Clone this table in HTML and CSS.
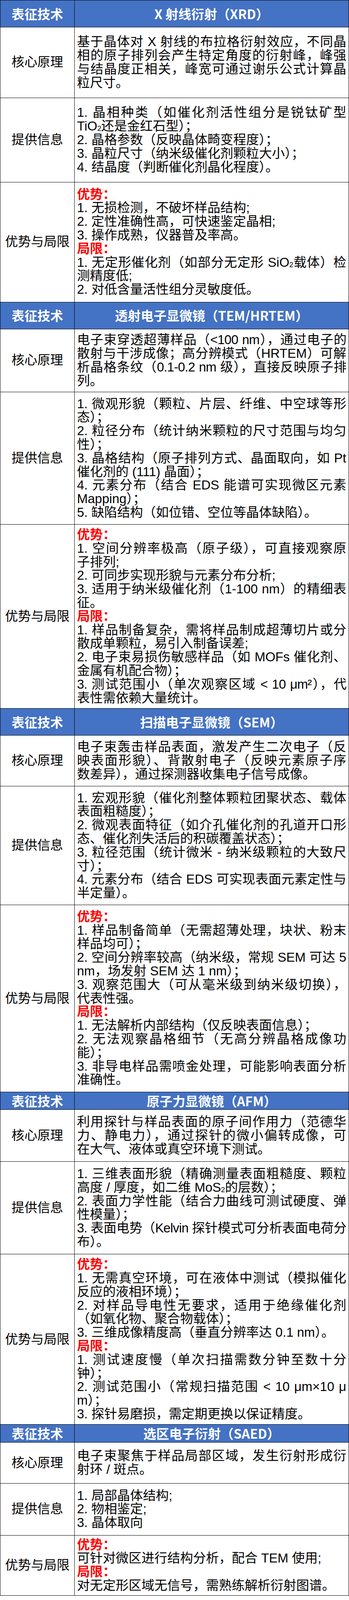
FILE: index.html
```html
<!DOCTYPE html>
<html lang="zh-CN">
<head>
<meta charset="utf-8">
<title>催化剂表征技术对比</title>
<link rel="stylesheet" href="styles.css">
</head>
<body>
<table class="spec">
<colgroup><col class="col-label"><col class="col-desc"></colgroup>
<tbody>
<tr class="head"><th>表征技术</th><th>X 射线衍射（XRD）</th></tr>
<tr class="gap-xl"><td class="label">核心原理</td><td class="desc"><p><span class="ln">基于晶体对 X 射线的布拉格衍射效应，不同晶</span><span class="ln">相的原子排列会产生特定角度的衍射峰，峰强</span><span class="ln">与结晶度正相关，峰宽可通过谢乐公式计算晶</span>粒尺寸。</p></td></tr>
<tr class="gap-xl"><td class="label">提供信息</td><td class="desc"><p><span class="ln">1. 晶相种类（如催化剂活性组分是锐钛矿型</span>TiO<sub class="sub">2</sub>还是金红石型）；</p><p>2. 晶格参数（反映晶体畸变程度）；</p><p>3. 晶粒尺寸（纳米级催化剂颗粒大小）；</p><p>4. 结晶度（判断催化剂晶化程度）。</p></td></tr>
<tr class="gap-m"><td class="label">优势与局限</td><td class="desc"><p class="tag">优势：</p><p>1. 无损检测，不破坏样品结构;</p><p>2. 定性准确性高，可快速鉴定晶相;</p><p>3. 操作成熟，仪器普及率高。</p><p class="tag">局限：</p><p><span class="ln">1. 无定形催化剂（如部分无定形 SiO<sub class="sub">2</sub>载体）检</span>测精度低;</p><p>2. 对低含量活性组分灵敏度低。</p></td></tr>

<tr class="head"><th>表征技术</th><th>透射电子显微镜（TEM/HRTEM）</th></tr>
<tr class="gap-s"><td class="label">核心原理</td><td class="desc"><p><span class="ln fit">电子束穿透超薄样品（&lt;100 nm），通过电子的</span><span class="ln">散射与干涉成像；高分辨模式（HRTEM）可解</span><span class="ln fit">析晶格条纹（0.1-0.2 nm 级），直接反映原子排</span>列。</p></td></tr>
<tr class="gap"><td class="label">提供信息</td><td class="desc"><p><span class="ln">1. 微观形貌（颗粒、片层、纤维、中空球等形</span>态）；</p><p><span class="ln">2. 粒径分布（统计纳米颗粒的尺寸范围与均匀</span>性）；</p><p><span class="ln">3. 晶格结构（原子排列方式、晶面取向，如 Pt</span>催化剂的 (111) 晶面）；</p><p><span class="ln">4. 元素分布（结合 EDS 能谱可实现微区元素</span>Mapping）；</p><p>5. 缺陷结构（如位错、空位等晶体缺陷）。</p></td></tr>
<tr class="gap-xs"><td class="label">优势与局限</td><td class="desc"><p class="tag">优势：</p><p><span class="ln">1. 空间分辨率极高（原子级），可直接观察原</span>子排列;</p><p>2. 可同步实现形貌与元素分布分析;</p><p><span class="ln">3. 适用于纳米级催化剂（1-100 nm）的精细表</span>征。</p><p class="tag">局限：</p><p><span class="ln">1. 样品制备复杂，需将样品制成超薄切片或分</span>散成单颗粒，易引入制备误差;</p><p><span class="ln">2. 电子束易损伤敏感样品（如 MOFs 催化剂、</span>金属有机配合物）；</p><p><span class="ln fit">3. 测试范围小（单次观察区域 &lt; 10 μm²），代</span>表性需依赖大量统计。</p></td></tr>

<tr class="head"><th>表征技术</th><th>扫描电子显微镜（SEM）</th></tr>
<tr class="gap"><td class="label">核心原理</td><td class="desc"><p><span class="ln">电子束轰击样品表面，激发产生二次电子（反</span><span class="ln">映表面形貌）、背散射电子（反映元素原子序</span>数差异），通过探测器收集电子信号成像。</p></td></tr>
<tr class="gap"><td class="label">提供信息</td><td class="desc"><p><span class="ln">1. 宏观形貌（催化剂整体颗粒团聚状态、载体</span>表面粗糙度）；</p><p><span class="ln">2. 微观表面特征（如介孔催化剂的孔道开口形</span>态、催化剂失活后的积碳覆盖状态）；</p><p><span class="ln">3. 粒径范围（统计微米 - 纳米级颗粒的大致尺</span>寸）；</p><p><span class="ln">4. 元素分布（结合 EDS 可实现表面元素定性与</span>半定量）。</p></td></tr>
<tr class="gap"><td class="label">优势与局限</td><td class="desc"><p class="tag">优势：</p><p><span class="ln">1. 样品制备简单（无需超薄处理，块状、粉末</span>样品均可）；</p><p><span class="ln">2. 空间分辨率较高（纳米级，常规 SEM 可达 5</span>nm，场发射 SEM 达 1 nm）；</p><p><span class="ln">3. 观察范围大（可从毫米级到纳米级切换），</span>代表性强。</p><p class="tag">局限：</p><p>1. 无法解析内部结构（仅反映表面信息）；</p><p><span class="ln">2. 无法观察晶格细节（无高分辨晶格成像功</span>能）；</p><p><span class="ln">3. 非导电样品需喷金处理，可能影响表面分析</span>准确性。</p></td></tr>

<tr class="head compact"><th>表征技术</th><th>原子力显微镜（AFM）</th></tr>
<tr class="gap-m"><td class="label">核心原理</td><td class="desc"><p><span class="ln">利用探针与样品表面的原子间作用力（范德华</span><span class="ln">力、静电力），通过探针的微小偏转成像，可</span>在大气、液体或真空环境下测试。</p></td></tr>
<tr class="gap-m"><td class="label">提供信息</td><td class="desc"><p><span class="ln">1. 三维表面形貌（精确测量表面粗糙度、颗粒</span>高度 / 厚度，如二维 MoS<sub class="sub">2</sub>的层数）；</p><p><span class="ln">2. 表面力学性能（结合力曲线可测试硬度、弹</span>性模量）；</p><p><span class="ln fit">3. 表面电势（Kelvin 探针模式可分析表面电荷分</span>布）。</p></td></tr>
<tr class="gap-xs"><td class="label">优势与局限</td><td class="desc"><p class="tag">优势：</p><p><span class="ln">1. 无需真空环境，可在液体中测试（模拟催化</span>反应的液相环境）；</p><p><span class="ln">2. 对样品导电性无要求，适用于绝缘催化剂</span>（如氧化物、聚合物载体）；</p><p>3. 三维成像精度高（垂直分辨率达 0.1 nm）。</p><p class="tag">局限：</p><p><span class="ln">1. 测试速度慢（单次扫描需数分钟至数十分</span>钟）；</p><p><span class="ln">2. 测试范围小（常规扫描范围 &lt; 10 μm×10 μ</span>m）；</p><p>3. 探针易磨损，需定期更换以保证精度。</p></td></tr>

<tr class="head compact"><th>表征技术</th><th>选区电子衍射（SAED）</th></tr>
<tr class="gap-l"><td class="label">核心原理</td><td class="desc"><p><span class="ln">电子束聚焦于样品局部区域，发生衍射形成衍</span>射环 / 斑点。</p></td></tr>
<tr class="gap-m"><td class="label">提供信息</td><td class="desc"><p>1. 局部晶体结构;</p><p>2. 物相鉴定;</p><p>3. 晶体取向</p></td></tr>
<tr class="gap-xxs"><td class="label">优势与局限</td><td class="desc"><p class="tag">优势：</p><p>可针对微区进行结构分析，配合 TEM 使用;</p><p class="tag">局限：</p><p>对无定形区域无信号，需熟练解析衍射图谱。</p></td></tr>
</tbody>
</table>
</body>
</html>
```

FILE: styles.css
```css
html, body {
  margin: 0;
  padding: 0;
  background: #ffffff;
}

body {
  font-family: "Liberation Sans", "Noto Sans CJK SC", sans-serif;
  color: #000000;
}

.spec {
  width: 893px;
  table-layout: fixed;
  border-collapse: collapse;
  font-size: 33px;
  line-height: 34.8px;
}

.col-label {
  width: 190px;
}

.spec th,
.spec td {
  border: 1px solid #000000;
  vertical-align: middle;
}

.head th {
  background: #4472c4;
  color: #ffffff;
  font-family: "Noto Sans CJK SC", sans-serif;
  font-weight: 700;
  text-align: center;
  padding: 16.5px 0;
}

.head.compact th {
  padding: 5px 0;
}

.label {
  text-align: center;
  padding-left: 0;
  padding-right: 0;
  white-space: nowrap;
}

.desc {
  padding-left: 6px;
  padding-right: 6px;
  text-align: left;
}

.desc p {
  margin: 0;
}

.ln {
  display: block;
  white-space: nowrap;
  text-align: justify;
  text-align-last: justify;
}

.ln.fit {
  letter-spacing: -0.8px;
}

.tag {
  color: #ff0000;
  font-weight: 700;
}

.sub {
  font-size: 0.55em;
  line-height: 1;
  vertical-align: -0.05em;
}

.gap-xl td { padding-top: 20.5px; padding-bottom: 20.5px; }
.gap-l td { padding-top: 17px; padding-bottom: 17px; }
.gap-m td { padding-top: 13.7px; padding-bottom: 13.7px; }
.gap td { padding-top: 12.45px; padding-bottom: 12.45px; }
.gap-s td { padding-top: 10.75px; padding-bottom: 10.75px; }
.gap-xs td { padding-top: 8.75px; padding-bottom: 8.75px; }
.gap-xxs td { padding-top: 7px; padding-bottom: 7px; }
```
